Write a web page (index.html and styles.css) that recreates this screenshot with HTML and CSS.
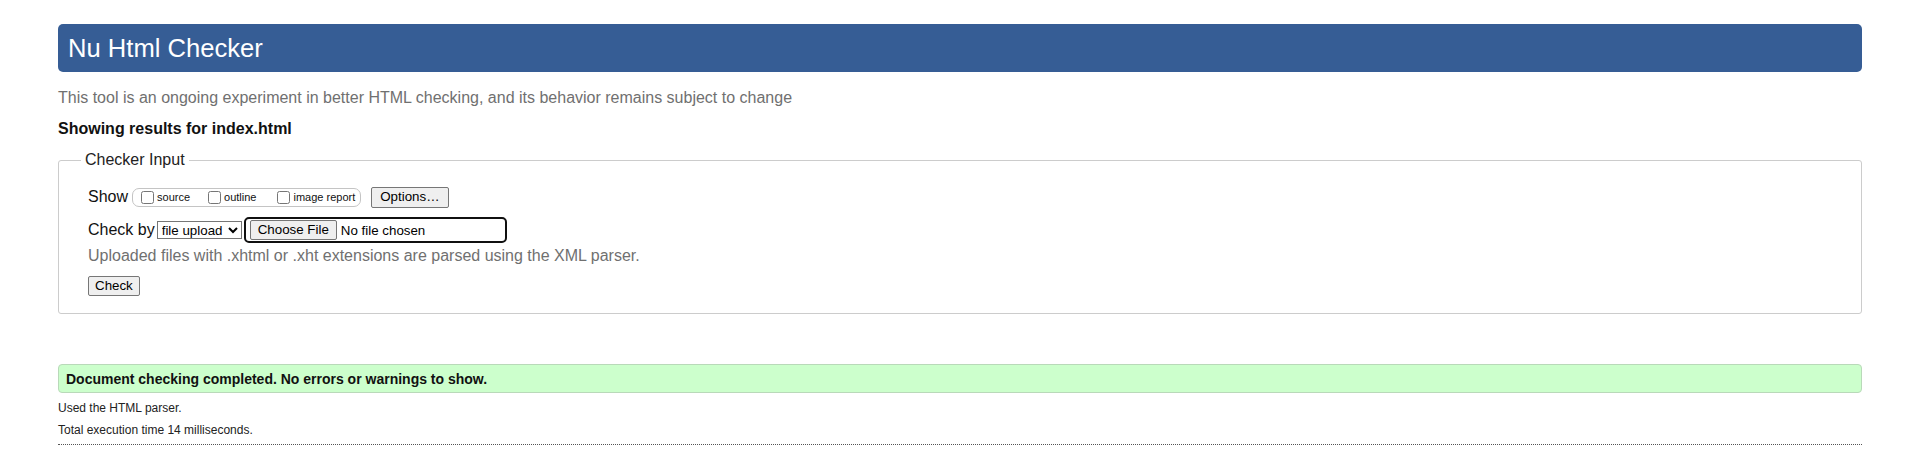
FILE: index.html
```html
<!DOCTYPE html>
<html lang="en">
<head>
<meta charset="utf-8">
<title>Nu Html Checker</title>
<link rel="stylesheet" href="styles.css">
</head>
<body>
<h1 class="title">Nu Html Checker</h1>
<p class="intro">This tool is an ongoing experiment in better HTML checking, and its behavior remains subject to change</p>
<p class="showing">Showing results for index.html</p>
<form class="checker">
  <fieldset class="input-set">
    <legend class="input-legend">Checker Input</legend>
    <div class="rows">
      <div class="row row-show">
        <span class="label">Show</span>
        <span class="show-group">
          <label class="opt opt-source"><input type="checkbox" class="cb">source</label>
          <label class="opt opt-outline"><input type="checkbox" class="cb">outline</label>
          <label class="opt opt-image"><input type="checkbox" class="cb">image report</label>
        </span>
        <button type="button" class="btn btn-options">Options…</button>
      </div>
      <div class="row row-by">
        <span class="label">Check by</span>
        <select class="sel"><option>file upload</option></select>
        <span class="filebox"><button type="button" class="btn btn-file">Choose File</button><span class="nofile">No file chosen</span></span>
      </div>
      <div class="row row-note">Uploaded files with .xhtml or .xht extensions are parsed using the XML parser.</div>
      <div class="row row-submit"><button type="button" class="btn btn-check">Check</button></div>
    </div>
  </fieldset>
</form>
<div class="success">Document checking completed. No errors or warnings to show.</div>
<p class="meta">Used the HTML parser.</p>
<p class="meta">Total execution time 14 milliseconds.</p>
<hr class="rule">
</body>
</html>
```

FILE: styles.css
```css
html, body {
  margin: 0;
  padding: 0;
  background: #fff;
}
body {
  font-family: "Liberation Sans", Arial, sans-serif;
  font-size: 16px;
  color: #111;
  padding: 0 58px;
}
.title {
  margin: 24px 0 0;
  height: 48px;
  line-height: 48px;
  padding: 0 10px;
  font-size: 25.6px;
  font-weight: normal;
  color: #fff;
  background: #365d95;
  border-radius: 5px;
}
.intro {
  margin: 17px 0 0;
  line-height: 18px;
  color: #707070;
}
.showing {
  margin: 13px 0 0;
  line-height: 18px;
  font-weight: bold;
  color: #111;
}
.checker {
  margin: 13px 0 0;
}
.input-set {
  margin: 0;
  min-width: 0;
  border: 1px solid #cccccc;
  border-radius: 3px;
  padding: 0 0 17px 22px;
}
.input-legend {
  padding: 0 4px;
  line-height: 18px;
  color: #222;
}
.rows {
  padding-left: 7px;
}
.row {
  display: flex;
  align-items: center;
}
.label {
  line-height: 18px;
}
.row-show {
  height: 22px;
  margin-top: 17px;
}
.show-group {
  display: inline-flex;
  align-items: center;
  box-sizing: border-box;
  height: 19px;
  margin-left: 4px;
  padding: 0 5px 0 4px;
  border: 1px solid #c4c4c4;
  border-radius: 7px;
  font-size: 11px;
  color: #111;
}
.opt {
  display: inline-flex;
  align-items: center;
  line-height: 13px;
}
.cb {
  width: 13px;
  height: 13px;
  margin: 0 3px 0 4px;
}
.opt-source {
  margin-right: 14px;
}
.opt-outline {
  margin-right: 17px;
}
.btn {
  font-family: "Liberation Sans", Arial, sans-serif;
  font-size: 13.333px;
  line-height: 16px;
  padding: 1px 6px;
  border: 1px solid #767676;
  border-radius: 2px;
  background: #efefef;
  color: #000;
}
.btn-options {
  margin-left: 10px;
  height: 21px;
  padding: 0 8px;
}
.row-by {
  height: 26px;
  margin-top: 9px;
}
.sel {
  box-sizing: border-box;
  margin: 0 0 0 2px;
  width: 85px;
  height: 18px;
  font-family: "Liberation Sans", Arial, sans-serif;
  font-size: 13.333px;
  color: #000;
  border: 1px solid #767676;
  border-radius: 0;
  background: #fff;
}
.filebox {
  display: inline-flex;
  align-items: center;
  box-sizing: border-box;
  width: 263px;
  height: 26px;
  margin-left: 2px;
  padding-left: 4px;
  border: 2px solid #101010;
  border-radius: 5px;
  font-size: 13.333px;
  color: #000;
}
.btn-file {
  padding: 1px 7px;
  margin-right: 4px;
}
.row-note {
  margin-top: 4px;
  line-height: 18px;
  color: #707070;
}
.row-submit {
  margin-top: 11px;
  height: 20px;
}
.success {
  margin-top: 50px;
  padding: 6px 7px 5px;
  line-height: 16px;
  font-size: 14px;
  font-weight: bold;
  color: #111;
  background: #ccffcc;
  border: 1px solid #b9d9b9;
  border-radius: 4px;
}
.meta {
  margin: 8px 0 0;
  font-size: 12px;
  line-height: 14px;
  color: #222;
}
.rule {
  margin: 7px 0 0;
  height: 0;
  border: 0;
  border-top: 1px dotted #555;
}
```
